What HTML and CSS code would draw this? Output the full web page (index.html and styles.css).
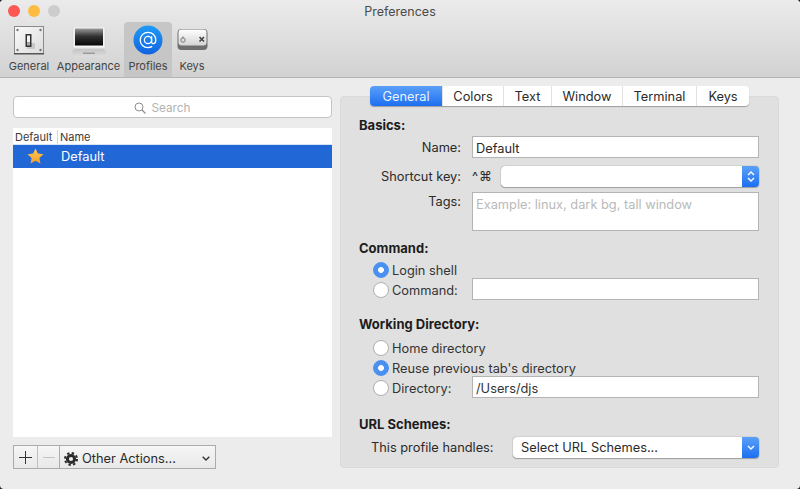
FILE: index.html
```html
<!DOCTYPE html>
<html lang="en">
<head>
<meta charset="UTF-8">
<meta name="viewport" content="width=device-width, initial-scale=1.0">
<title>Preferences</title>
<link rel="stylesheet" href="styles.css">
</head>
<body>

<div class="window">
    <div class="toolbar">
        <div class="titlebar">
            <div class="lights">
                <span class="light red"></span>
                <span class="light yellow"></span>
                <span class="light gray"></span>
            </div>
            <div class="title">Preferences</div>
        </div>
        <div class="tools">
            <div class="tool tool-general">
                <svg width="32" height="30" viewBox="0 0 32 30">
                    <defs>
                        <linearGradient id="plate" x1="0" y1="0" x2="1" y2="1">
                            <stop offset="0" stop-color="#fafafa"/>
                            <stop offset="1" stop-color="#dcdcdc"/>
                        </linearGradient>
                    </defs>
                    <rect x="1.5" y="0.5" width="29" height="27" fill="url(#plate)" stroke="#8a8a8a"/>
                    <rect x="1" y="27" width="30" height="1.5" fill="#555"/>
                    <circle cx="4.5" cy="4" r="1.2" fill="#777"/>
                    <circle cx="27.5" cy="4" r="1.2" fill="#777"/>
                    <circle cx="4.5" cy="24" r="1.2" fill="#777"/>
                    <circle cx="27.5" cy="24" r="1.2" fill="#777"/>
                    <rect x="14" y="17" width="8" height="6" fill="#bbb" opacity="0.7"/>
                    <rect x="12.5" y="8" width="6" height="13" rx="0.5" fill="#333"/>
                    <rect x="14" y="9.5" width="3" height="7" fill="#f4f4f4"/>
                    <rect x="14" y="16.5" width="3" height="3" fill="#aaa"/>
                </svg>
                <span>General</span>
            </div>
            <div class="tool tool-appearance">
                <svg width="34" height="32" viewBox="0 0 34 32">
                    <defs>
                        <linearGradient id="screen" x1="0" y1="0" x2="0" y2="1">
                            <stop offset="0" stop-color="#9a9a9a"/>
                            <stop offset="0.45" stop-color="#333"/>
                            <stop offset="1" stop-color="#050505"/>
                        </linearGradient>
                        <linearGradient id="stand" x1="0" y1="0" x2="0" y2="1">
                            <stop offset="0" stop-color="#c4c4c4"/>
                            <stop offset="1" stop-color="#dedede"/>
                        </linearGradient>
                    </defs>
                    <rect x="1" y="0" width="32" height="21" fill="#f3f3f3" stroke="#d0d0d0" stroke-width="0.5"/>
                    <rect x="3" y="1.5" width="28" height="17" fill="url(#screen)"/>
                    <rect x="0" y="22" width="34" height="8" rx="4" fill="url(#stand)"/>
                    <rect x="11" y="25.5" width="12" height="1.5" fill="#9a9a9a"/>
                </svg>
                <span>Appearance</span>
            </div>
            <div class="tool tool-profiles">
                <svg width="30" height="30" viewBox="0 0 30 30">
                    <defs>
                        <linearGradient id="at" x1="0" y1="0" x2="0" y2="1">
                            <stop offset="0" stop-color="#1f9bf5"/>
                            <stop offset="1" stop-color="#1263e0"/>
                        </linearGradient>
                    </defs>
                    <circle cx="15" cy="15" r="14.5" fill="url(#at)"/>
                    <circle cx="15" cy="15" r="3.6" fill="none" stroke="#fff" stroke-width="1.3"/>
                    <path d="M18.6 11.2v5.6c0 2.8 4.2 2.8 4.2-1.8 0-4.6-3.4-7.6-7.8-7.6-4.4 0-7.8 3.4-7.8 7.6 0 4.4 3.4 7.6 7.8 7.6 1.6 0 3-.4 4.2-1.2" fill="none" stroke="#fff" stroke-width="1.3"/>
                </svg>
                <span>Profiles</span>
            </div>
            <div class="tool tool-keys">
                <svg width="31" height="24" viewBox="0 0 31 24">
                    <defs>
                        <linearGradient id="key" x1="0" y1="0" x2="0" y2="1">
                            <stop offset="0" stop-color="#fff"/>
                            <stop offset="1" stop-color="#d4d4d4"/>
                        </linearGradient>
                    </defs>
                    <rect x="0.5" y="1" width="30" height="21" rx="4" fill="#6e6e6e"/>
                    <rect x="1.5" y="1.5" width="28" height="16" rx="3" fill="url(#key)"/>
                    <circle cx="6" cy="12" r="2.2" fill="none" stroke="#777" stroke-width="1"/>
                    <path d="M5.5 8.5h1v2h-1z" fill="#777"/>
                    <path d="M22.5 9l4.5 4.5M27 9l-4.5 4.5" stroke="#444" stroke-width="1.6"/>
                </svg>
                <span>Keys</span>
            </div>
        </div>
    </div>

    <div class="content">
        <div class="sidebar">
            <div class="search">
                <svg width="12" height="12" viewBox="0 0 12 12">
                    <circle cx="5" cy="5" r="4" fill="none" stroke="#8f8f8f" stroke-width="1"/>
                    <path d="M8 8l3.5 3.5" stroke="#8f8f8f" stroke-width="1.2"/>
                </svg>
                <span>Search</span>
            </div>
            <div class="table">
                <div class="table-head">
                    <span class="col-default">Default</span>
                    <span class="col-name">Name</span>
                </div>
                <div class="table-row">
                    <span class="cell-star">
                        <svg width="17" height="16" viewBox="0 0 17 16">
                            <defs>
                                <linearGradient id="star" x1="0" y1="0" x2="0" y2="1">
                                    <stop offset="0" stop-color="#ffc850"/>
                                    <stop offset="1" stop-color="#f0a030"/>
                                </linearGradient>
                            </defs>
                            <path d="M8.5 0.5l2.4 5 5.6.7-4.1 3.8 1.1 5.5-5-2.8-5 2.8 1.1-5.5L.5 6.2l5.6-.7z" fill="url(#star)"/>
                        </svg>
                    </span>
                    <span>Default</span>
                </div>
            </div>
            <div class="actions">
                <div class="action-btn">
                    <svg width="13" height="13" viewBox="0 0 13 13"><path d="M6.5 0v13M0 6.5h13" stroke="#333" stroke-width="1"/></svg>
                </div>
                <div class="action-btn disabled">
                    <svg width="12" height="13" viewBox="0 0 12 13"><path d="M0 6.5h12" stroke="#c4c4c4" stroke-width="1"/></svg>
                </div>
                <div class="action-menu">
                    <svg width="14" height="14" viewBox="0 0 14 14">
                        <circle cx="7" cy="7" r="3.6" fill="none" stroke="#2b2b2b" stroke-width="3"/>
                        <circle cx="7" cy="7" r="6" fill="none" stroke="#2b2b2b" stroke-width="2" stroke-dasharray="2.4 2.31"/>
                    </svg>
                    <span class="action-label">Other Actions...</span>
                    <svg width="8" height="5" viewBox="0 0 8 5"><path d="M.7.7L4 4 7.3.7" fill="none" stroke="#333" stroke-width="1.4"/></svg>
                </div>
            </div>
        </div>

        <div class="panel-wrap">
            <div class="tabs">
                <div class="tab active">General</div>
                <div class="tab">Colors</div>
                <div class="tab">Text</div>
                <div class="tab">Window</div>
                <div class="tab">Terminal</div>
                <div class="tab">Keys</div>
            </div>
            <div class="panel">
                <h4 class="basics">Basics:</h4>
                <div class="row name-row">
                    <label>Name:</label>
                    <div class="field">Default</div>
                </div>
                <div class="row shortcut-row">
                    <label>Shortcut key:</label>
                    <span class="mods">^⌘</span>
                    <div class="select shortcut-select">
                        <span class="select-text"></span>
                        <span class="select-arrow">
                            <svg width="8" height="13" viewBox="0 0 8 13"><path d="M1 5l3-3 3 3M1 8l3 3 3-3" fill="none" stroke="#fff" stroke-width="1.4"/></svg>
                        </span>
                    </div>
                </div>
                <div class="row tags-row">
                    <label>Tags:</label>
                    <div class="field tags">Example: linux, dark bg, tall window</div>
                </div>

                <h4 class="command-head">Command:</h4>
                <div class="radio-row login-row">
                    <span class="radio on"></span>
                    <span>Login shell</span>
                </div>
                <div class="radio-row command-row">
                    <span class="radio"></span>
                    <span class="radio-label">Command:</span>
                    <div class="field"></div>
                </div>

                <h4 class="dir-head">Working Directory:</h4>
                <div class="radio-row home-row">
                    <span class="radio"></span>
                    <span>Home directory</span>
                </div>
                <div class="radio-row reuse-row">
                    <span class="radio on"></span>
                    <span>Reuse previous tab's directory</span>
                </div>
                <div class="radio-row directory-row">
                    <span class="radio"></span>
                    <span class="radio-label">Directory:</span>
                    <div class="field">/Users/djs</div>
                </div>

                <h4 class="url-head">URL Schemes:</h4>
                <div class="url-row">
                    <label>This profile handles:</label>
                    <div class="select url-select">
                        <span class="select-text">Select URL Schemes...</span>
                        <span class="select-arrow">
                            <svg width="8" height="6" viewBox="0 0 8 6"><path d="M1 1l3 3 3-3" fill="none" stroke="#fff" stroke-width="1.4"/></svg>
                        </span>
                    </div>
                </div>
            </div>
        </div>
    </div>
</div>

</body>
</html>
```

FILE: styles.css
```css
html, body {
    margin: 0;
    padding: 0;
    height: 100%;
    background-color: #1c1c1c;
}
body {
    font-family: 'Inter', 'Liberation Sans', sans-serif;
    font-size: 12.8px;
    color: #2a2a2a;
    overflow: hidden;
}
.window {
    width: 800px;
    height: 489px;
    background-color: #ececec;
    border-radius: 4px;
    overflow: hidden;
}

/* title bar and toolbar */
.toolbar {
    height: 77px;
    box-sizing: content-box;
    background: linear-gradient(#ebebeb, #d2d2d2);
    border-bottom: 1px solid #b4b4b4;
}
.titlebar {
    height: 22px;
    display: flex;
    align-items: center;
    position: relative;
}
.lights {
    display: flex;
    gap: 8px;
    padding-left: 8px;
}
.light {
    width: 12px;
    height: 12px;
    border-radius: 50%;
}
.red { background-color: #fc5753; }
.yellow { background-color: #fdbc40; }
.gray { background-color: #cdcdcd; }
.title {
    position: absolute;
    left: 0;
    right: 0;
    text-align: center;
    color: #4b4b4b;
    font-size: 12.5px;
}
.tools {
    display: flex;
    height: 55px;
    padding-left: 8px;
    font-size: 11px;
    color: #444;
}
.tool {
    display: flex;
    flex-direction: column;
    align-items: center;
    box-sizing: border-box;
    height: 55px;
    padding-top: 4px;
    white-space: nowrap;
}
.tool span {
    margin-top: auto;
    padding-bottom: 4px;
    line-height: 14px;
}
.tool-general { width: 42px; margin-right: 7px; }
.tool-appearance { width: 63px; margin-right: 4px; padding-top: 5px; }
.tool-profiles {
    width: 48px;
    margin-right: 5px;
    background-color: #c6c6c6;
    border-radius: 4px 4px 0 0;
    padding-top: 3px;
}
.tool-keys { width: 30px; padding-top: 6px; }

/* main area */
.content {
    display: flex;
    padding-left: 13px;
}
.sidebar {
    width: 319px;
    margin-right: 8px;
    padding-top: 18px;
}
.search {
    height: 22px;
    box-sizing: border-box;
    background: white;
    border: 1px solid #c4c4c4;
    border-radius: 4px;
    padding: 2px 20px 0 0;
    display: flex;
    align-items: center;
    justify-content: center;
    gap: 5px;
    font-size: 11.8px;
    color: #b2b2b2;
}
.table {
    margin-top: 10px;
    height: 309px;
    background: white;
}
.table-head {
    height: 17px;
    box-sizing: border-box;
    border-bottom: 1px solid #d6e4f5;
    display: flex;
    align-items: center;
    font-size: 11px;
    color: #3a3a3a;
    line-height: 14px;
    padding-top: 1px;
}
.col-default {
    width: 42px;
    padding-left: 2px;
    border-right: 1px solid #d8d8d8;
}
.col-name { padding-left: 2px; }
.table-row {
    height: 23px;
    padding-bottom: 1px;
    box-sizing: border-box;
    background-color: #2168d6;
    color: white;
    display: flex;
    align-items: center;
}
.cell-star {
    width: 48px;
    display: flex;
    justify-content: center;
    padding-right: 4px;
    box-sizing: border-box;
}

.actions {
    display: flex;
    width: 203px;
    height: 24px;
    margin-top: 8px;
    box-sizing: border-box;
    border: 1px solid #ababab;
    background: linear-gradient(#f6f6f6, #e8e8e8);
}
.action-btn {
    width: 23px;
    display: flex;
    align-items: center;
    justify-content: center;
    border-right: 1px solid #c0c0c0;
}
.action-btn.disabled { width: 21px; border-right-color: #ababab; }
.action-menu {
    flex: 1;
    display: flex;
    align-items: center;
    padding: 3px 5px 0 4px;
    gap: 4px;
}
.action-label { flex: 1; }

/* profile panel */
.panel-wrap { width: 439px; padding-top: 8px; position: relative; }
.tabs {
    display: grid;
    grid-template-columns: 72px 61px 48px 71px 74px 53px;
    width: 379px;
    height: 20px;
    margin-left: 30px;
    margin-bottom: -10px;
    position: relative;
    background: white;
    border-radius: 4px;
    box-shadow: 0 1px 1px rgba(0, 0, 0, 0.3);
}
.tab {
    display: flex;
    align-items: center;
    justify-content: center;
    border-left: 1px solid #e2e2e2;
    color: #2a2a2a;
}
.tab.active {
    border-left: none;
    background: linear-gradient(#5aa0f9, #1d6ff0);
    color: #e8f2ff;
    border-radius: 4px 0 0 4px;
}
.panel {
    height: 372px;
    box-sizing: border-box;
    background-color: #e0e0e0;
    border: 1px solid #dadada;
    border-radius: 4px;
    padding: 20px 19px 0 18px;
}
h4 {
    margin: 0;
    font-size: 13px;
    line-height: 16px;
    font-weight: 700;
    color: #1c1c1c;
}
.row {
    display: flex;
    align-items: center;
}
.row label {
    width: 102px;
    text-align: right;
    margin-right: 11px;
}
.field {
    flex: 1;
    height: 22px;
    box-sizing: border-box;
    background: white;
    border: 1px solid #b4b4b4;
    padding-left: 3px;
    line-height: 24px;
}
.name-row { margin-top: 3px; }
.shortcut-row { margin-top: 8px; height: 21px; }
.mods { width: 29px; letter-spacing: 1px; }
.tags-row { margin-top: 5px; align-items: flex-start; }
.tags-row label { padding-top: 2px; }
.field.tags {
    height: 39px;
    color: #b9b9b9;
}
.select {
    flex: 1;
    height: 21px;
    background: white;
    border-radius: 4px;
    box-shadow: 0 0 1px rgba(0, 0, 0, 0.6), 0 1px 1px rgba(0, 0, 0, 0.25);
    display: flex;
    overflow: hidden;
}
.select-text {
    flex: 1;
    line-height: 21px;
    padding-left: 8px;
}
.select-arrow {
    width: 17px;
    display: flex;
    align-items: center;
    justify-content: center;
    background: linear-gradient(#5aa0f9, #1d6ff0);
}
.command-head { margin-top: 9px; }
.radio-row {
    display: flex;
    align-items: center;
    height: 20px;
    padding-left: 14px;
    color: #333;
}
.radio-row .field { margin-top: -2px; }
.radio {
    width: 16px;
    height: 16px;
    box-sizing: border-box;
    border-radius: 50%;
    background: white;
    border: 1px solid #b0b0b0;
    margin-right: 3px;
    flex: none;
}
.radio.on {
    background: radial-gradient(circle, white 0, white 2.6px, #4a90f0 3.2px);
    border-color: #4a90f0;
}
.radio-label { width: 80px; }
.login-row { margin-top: 4px; }
.dir-head { margin-top: 16px; }
.home-row { margin-top: 6px; }
.url-head { margin-top: 18px; }
.url-row {
    display: flex;
    align-items: center;
    margin-top: 5px;
    padding-left: 12px;
}
.url-row label { width: 142px; }
```
